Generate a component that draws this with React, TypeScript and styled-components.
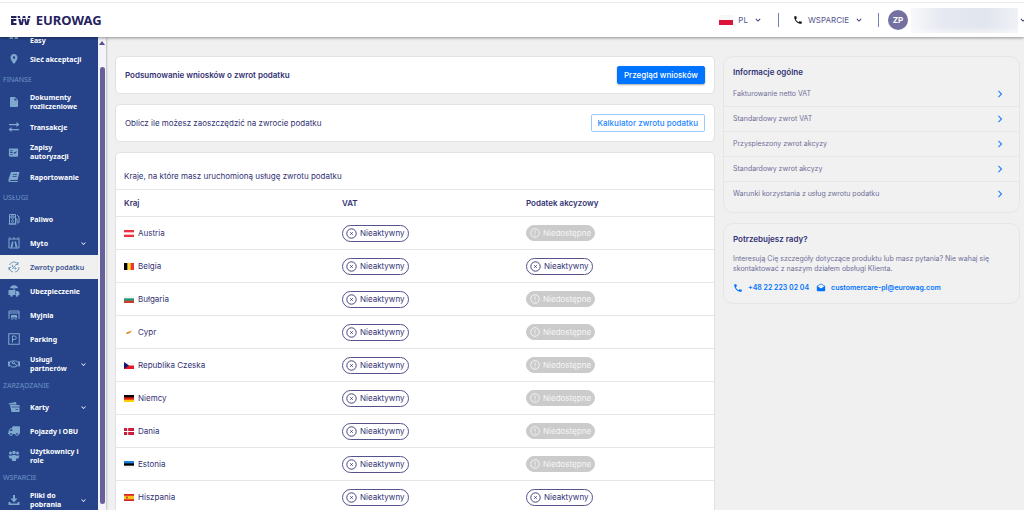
import React from 'react';
import styled, { createGlobalStyle, css } from 'styled-components';
import {
  MdLocationOn, MdInsertDriveFile, MdPhone, MdDrafts, MdKeyboardArrowDown, MdChevronRight, MdFactCheck,
} from 'react-icons/md';
import { FaRegHandshake, FaTruck } from 'react-icons/fa';

const navy = '#323174';
const blue = '#0073ff';
const line = '#e6e6ea';

const GlobalStyle = createGlobalStyle`
  * { box-sizing: border-box; }
  body { margin: 0; background: #f0f0f0; color: ${navy}; font-family: Inter, "Liberation Sans", sans-serif; font-size: 8px; line-height: 10px; }
  button { font-family: inherit; cursor: pointer; }
  a { color: inherit; text-decoration: none; }
  svg { display: block; flex: none; }
  h2, p, ul { margin: 0; padding: 0; }
  ul { list-style: none; }
`;

const Page = styled.div`
  height: 100vh;
  display: flex;
  flex-direction: column;
  overflow: hidden;
`;

const Header = styled.header`
  flex: none;
  height: 37px;
  padding: 3px 0 0 10px;
  display: flex;
  align-items: center;
  background: #fff;
  background-image: linear-gradient(#e9e9e9, #e9e9e9);
  background-size: 100% 1px;
  background-position: 0 2px;
  background-repeat: no-repeat;
  box-shadow: 0 1px 3px rgba(0, 0, 0, 0.4);
  position: relative;
  z-index: 2;
`;

const Brand = styled.a`
  display: flex;
  align-items: center;
  gap: 5px;
  margin-right: auto;
  font: 700 13px/16px "Noto Sans", sans-serif;
  color: #25235f;
`;

const BrandMark = styled.span`
  font: 800 13px/16px "Open Sans", sans-serif;
  background: linear-gradient(#fff, #fff) 0 6px / 100% 1px no-repeat, #25235f;
  background-clip: text;
  color: transparent;
`;

const HeaderButton = styled.button<{ $wide?: boolean }>`
  border: 0;
  background: none;
  padding: 0 ${p => (p.$wide ? 14 : 15)}px;
  height: 14px;
  display: flex;
  align-items: center;
  gap: 5px;
  font-size: 8px;
  line-height: 10px;
  color: #55548c;
  border-right: 1px solid #6f83b8;
`;

const Account = styled.button`
  border: 0;
  background: none;
  margin-right: -4px;
  padding: 0 0 0 9px;
  display: flex;
  align-items: center;
  gap: 3px;
  color: ${navy};
  > svg { margin-left: -3px; }
`;

const Avatar = styled.span`
  width: 20px;
  height: 20px;
  border-radius: 50%;
  background: #7470a0;
  color: #fff;
  font-weight: 700;
  font-size: 8px;
  line-height: 20px;
  text-align: center;
`;

const HiddenName = styled.span`
  width: 107px;
  height: 25px;
  background: linear-gradient(90deg, #f8f9fb, #e6e9f1 28%, #e1e5ee 70%, #eff1f6);
  box-shadow: inset 0 -5px 5px -2px rgba(250, 250, 252, 0.7);
`;

const Body = styled.div`
  flex: 1;
  min-height: 0;
  display: flex;
`;

const Sidebar = styled.nav`
  flex: none;
  width: 98px;
  background: #26438a;
  overflow: hidden;
  font-family: "Noto Sans", sans-serif;
`;

const NavList = styled.ul`
  margin-top: -14px;
`;

const NavSection = styled.li`
  height: 18px;
  padding-left: 3px;
  font-size: 7px;
  line-height: 18px;
  color: #6e93c4;
`;

const NavLink = styled.a<{ $tall?: boolean; $active?: boolean; $low?: boolean }>`
  height: ${p => (p.$tall ? 26 : 24)}px;
  padding: 0 10px 0 8px;
  display: grid;
  grid-template-columns: 12px 1fr auto;
  column-gap: 10px;
  align-items: center;
  font-size: 7px;
  line-height: 9px;
  font-weight: 700;
  white-space: nowrap;
  color: #fff;
  > svg:first-child { color: #7fa8cf; }
  > span { padding-top: ${p => (p.$low ? 10 : 0)}px; }
  ${p => p.$active && css`
    background: #f0f0f0;
    color: #35508f;
    font-weight: 600;
    > svg:first-child { color: #5b8fb9; }
  `}
`;

const ScrollTrack = styled.div`
  flex: none;
  width: 8px;
  padding: 4px 1px 6px;
  display: flex;
  flex-direction: column;
  align-items: center;
  gap: 22px;
  background: #f3f3f9;
  box-shadow: 1px 0 2px rgba(0, 0, 0, 0.2);
`;

const ScrollThumb = styled.div`
  flex: 1;
  width: 5px;
  border-radius: 3px;
  background: #65619a;
`;

const Main = styled.main`
  flex: 1;
  min-width: 0;
  padding: 19px 4px 0 9px;
  display: grid;
  grid-template-columns: minmax(0, 1fr) 297px;
  align-items: start;
  gap: 8px;
`;

const Column = styled.div`
  display: flex;
  flex-direction: column;
  gap: 10px;
`;

const Card = styled.section`
  background: #fff;
  border: 1px solid #e2e2e4;
  border-radius: 5px;
`;

const ActionCard = styled(Card)`
  height: 38px;
  padding: 0 9px;
  display: flex;
  align-items: center;
  justify-content: space-between;
`;

const CardTitle = styled.h2`
  font-size: 8px;
  line-height: 10px;
  font-weight: 600;
`;

const ActionButton = styled.button<{ $primary?: boolean }>`
  height: 18px;
  padding: 0 6px;
  border-radius: 2px;
  font-size: 8px;
  line-height: 10px;
  font-weight: 500;
  border: 1px solid ${p => (p.$primary ? blue : '#9ccaff')};
  background: ${p => (p.$primary ? blue : '#fff')};
  color: ${p => (p.$primary ? '#fff' : '#2585ff')};
  box-shadow: ${p => (p.$primary ? '0 1px 2px rgba(0, 0, 0, 0.35)' : 'none')};
`;

const TableIntro = styled.p`
  height: 37px;
  padding: 18px 8px 0;
  border-bottom: 1px solid ${line};
`;

const Table = styled.table`
  width: 100%;
  table-layout: fixed;
  border-collapse: separate;
  border-spacing: 0;
  th, td { padding: 0 8px; text-align: left; border-bottom: 1px solid ${line}; }
  th { height: 27px; font-weight: 600; }
  td { height: 33px; }
`;

const WideCol = styled.col`width: 218px;`;
const MidCol = styled.col`width: 184px;`;

const Country = styled.span`
  display: flex;
  align-items: center;
  gap: 4px;
`;

const Pill = styled.span<{ $off?: boolean }>`
  display: inline-flex;
  align-items: center;
  vertical-align: middle;
  gap: 3px;
  height: ${p => (p.$off ? 16 : 17)}px;
  padding: 0 3px;
  border-radius: 9px;
  border: 1px solid ${p => (p.$off ? '#cbcbcb' : '#55528c')};
  background: ${p => (p.$off ? '#cbcbcb' : '#fff')};
  color: ${p => (p.$off ? '#f6f6f6' : navy)};
`;

const InfoCard = styled(Card)`
  background: #f1f1f1;
  border-color: #e6e6e6;
  border-radius: 10px;
  padding: 10px 0 6px;
  > h2 { padding: 0 9px; }
`;

const InfoList = styled.ul`
  padding-top: 4px;
`;

const InfoLink = styled.a`
  height: 25px;
  padding: 0 12px 0 9px;
  display: flex;
  align-items: center;
  justify-content: space-between;
  font-size: 7px;
  color: #706f99;
  svg { color: #2585ff; }
  li + li & { border-top: 1px solid #e6e6e6; }
`;

const HelpText = styled.p`
  padding: 10px 9px 0;
  font-size: 7px;
  line-height: 10px;
  color: #706f99;
`;

const Contacts = styled.div`
  padding: 9px 9px 4px;
  display: flex;
  gap: 7px;
`;

const ContactLink = styled.a`
  display: flex;
  align-items: center;
  gap: 5px;
  font-size: 7px;
  line-height: 10px;
  font-weight: 600;
  color: ${blue};
`;

const Glyph = ({ children }: { children: React.ReactNode }) => (
  <svg width="12" height="12" viewBox="0 0 24 24" fill="none" stroke="currentColor" strokeWidth="2" aria-hidden="true">{children}</svg>
);

const solid = { fill: 'currentColor', stroke: 'none' };

const icons = {
  easy: <Glyph><path {...solid} d="M3 6h7v14H3zM13 6h7v14h-7z" /></Glyph>,
  pin: <MdLocationOn size={12} />,
  file: <MdInsertDriveFile size={12} />,
  swap: <Glyph><path d="M2 7h18M4 17h18" strokeWidth="2.5" /><path {...solid} d="M17 2l6 5-6 5zM7 12l-6 5 6 5z" /></Glyph>,
  check: <MdFactCheck size={11} />,
  book: <Glyph><path {...solid} d="M8 2h15l-4 16H5c-2 0-2 2 0 2h15l-1 2H4c-3 0-4-2-3-5L5 5c0-2 1-3 3-3z" /><path d="M10 7h8M9 11h8" stroke="#26438a" strokeWidth="1.5" /></Glyph>,
  fuel: <Glyph><path d="M3 22V3h12v19zM1 22h16M6 6h6v4H6zM15 12h3v6c0 3 4 3 4 0V8l-4-4" /><path d="M9 13c-3 4-2 6 0 6s3-2 0-6z" /></Glyph>,
  toll: <Glyph><path d="M2 22V4h20v18zM1 2h4M10 2h4M19 2h4" /><path {...solid} d="M8 9h3l-2 12H5zM13 9h3l3 12h-4z" /></Glyph>,
  refund: <Glyph><path d="M20 6A10 10 0 0 0 3 8M2 13a10 10 0 0 0 8 9M14 22a10 10 0 0 0 8-10" strokeWidth="1.8" /><path d="M20 2v5h-5M2 18v-5h4" strokeWidth="1.8" /><path d="M9 16l6-7" /><circle cx="9" cy="10" r="1.2" /><circle cx="15" cy="15" r="1.2" /></Glyph>,
  insure: <Glyph><path {...solid} d="M4 7c0-9 16-9 16 0l-3-1-2 1-3-1-3 1-2-1zM1 10h14v10H1zM16 12h4l3 4v4h-7z" /><path d="M12 5v5" /><circle {...solid} cx="7" cy="21" r="2.5" /><circle {...solid} cx="18" cy="21" r="2.5" /></Glyph>,
  wash: <Glyph><path d="M2 20V4h20v16M2 8h20" /><path d="M7 18v-5h10v5zM8 20v2M16 20v2M7 15h10" /></Glyph>,
  parking: <Glyph><rect x="1.5" y="1.5" width="21" height="21" /><path d="M9 19V6h4a3.500 3.500 0 0 1 0 7H9" /></Glyph>,
  partner: <FaRegHandshake size={12} />,
  cards: <Glyph><path {...solid} d="M1 5l15-3 1 5H2zM4 8h19v14H7z" /><path d="M7 12h16M15 17h5" stroke="#26438a" strokeWidth="1.5" /></Glyph>,
  truck: <FaTruck size={12} transform="scale(-1 1)" />,
  users: <Glyph><g {...solid}><circle cx="5" cy="6" r="3" /><circle cx="12" cy="5" r="3.500" /><circle cx="19" cy="6" r="3" /><path d="M1 11h6l1 6H3zM17 11h6l-2 6h-5zM7 12c0-3 10-3 10 0l-1 10H8z" /></g></Glyph>,
  download: <Glyph><path {...solid} d="M10 2h4v7h5l-7 8-7-8h5zM1 16h4v3h14v-3h4v6H1z" /></Glyph>,
};

type NavItem = { icon: keyof typeof icons; lines: string[]; menu?: boolean; active?: boolean; low?: boolean };
type NavEntry = { section: string } | NavItem;

const nav: NavEntry[] = [
  { icon: 'easy', lines: ['Easy'], low: true },
  { icon: 'pin', lines: ['Sieć akceptacji'] },
  { section: 'FINANSE' },
  { icon: 'file', lines: ['Dokumenty', 'rozliczeniowe'] },
  { icon: 'swap', lines: ['Transakcje'] },
  { icon: 'check', lines: ['Zapisy', 'autoryzacji'] },
  { icon: 'book', lines: ['Raportowanie'] },
  { section: 'USŁUGI' },
  { icon: 'fuel', lines: ['Paliwo'] },
  { icon: 'toll', lines: ['Myto'], menu: true },
  { icon: 'refund', lines: ['Zwroty podatku'], active: true },
  { icon: 'insure', lines: ['Ubezpieczenie'] },
  { icon: 'wash', lines: ['Myjnia'] },
  { icon: 'parking', lines: ['Parking'] },
  { icon: 'partner', lines: ['Usługi', 'partnerów'], menu: true },
  { section: 'ZARZĄDZANIE' },
  { icon: 'cards', lines: ['Karty'], menu: true },
  { icon: 'truck', lines: ['Pojazdy i OBU'] },
  { icon: 'users', lines: ['Użytkownicy i', 'role'] },
  { section: 'WSPARCIE' },
  { icon: 'download', lines: ['Pliki do', 'pobrania'], menu: true },
];

const stripes = (a: string, b: string, c: string) => (
  <><rect width="10" height="7" fill={b} /><rect width="10" height="2.33" fill={a} /><rect y="4.67" width="10" height="2.33" fill={c} /></>
);

const flags: Record<string, React.ReactNode> = {
  at: stripes('#ed3340', '#fff', '#ed3340'),
  be: <><rect width="10" height="7" fill="#fdda24" /><rect width="3.33" height="7" /><rect x="6.67" width="3.33" height="7" fill="#ef3340" /></>,
  bg: stripes('#f4f4f4', '#219a78', '#d13b2c'),
  cy: <path d="M2 4C3 2.500 5 3 8 1.500 7 3 6.500 4.500 4 4.800L2.500 5z" fill="#e08a2c" />,
  cz: <><rect width="10" height="7" fill="#f6f6f6" /><rect y="3.500" width="10" height="3.500" fill="#e81b22" /><path d="M0 0l5 3.500L0 7z" fill="#15156b" /></>,
  de: stripes('#000', '#dd1c1c', '#ffce00'),
  dk: <><rect width="10" height="7" fill="#c8203c" /><path d="M3.700 0v7M0 3.500h10" stroke="#fff" /></>,
  ee: stripes('#1f83dc', '#000', '#f4f4f4'),
  es: <><rect width="10" height="7" fill="#d8222a" /><rect y="1.750" width="10" height="3.500" fill="#fbc51c" /><rect x="2" y="2.500" width="2" height="2" fill="#b8602a" /></>,
};

const countries = [
  { flag: 'at', name: 'Austria', excise: false },
  { flag: 'be', name: 'Belgia', excise: true },
  { flag: 'bg', name: 'Bułgaria', excise: false },
  { flag: 'cy', name: 'Cypr', excise: false },
  { flag: 'cz', name: 'Republika Czeska', excise: false },
  { flag: 'de', name: 'Niemcy', excise: false },
  { flag: 'dk', name: 'Dania', excise: false },
  { flag: 'ee', name: 'Estonia', excise: false },
  { flag: 'es', name: 'Hiszpania', excise: true },
];

const infoLinks = [
  'Fakturowanie netto VAT',
  'Standardowy zwrot VAT',
  'Przyspieszony zwrot akcyzy',
  'Standardowy zwrot akcyzy',
  'Warunki korzystania z usług zwrotu podatku',
];

const Inactive = () => (
  <Pill>
    <svg width="11" height="11" viewBox="0 0 11 11" fill="none" stroke="currentColor">
      <circle cx="5.500" cy="5.500" r="4.700" strokeWidth="0.900" /><path d="M4.300 4.300l2.400 2.400M6.700 4.300L4.300 6.700" strokeWidth="0.900" />
    </svg>
    Nieaktywny
  </Pill>
);

const Unavailable = () => (
  <Pill $off>
    <svg width="10" height="10" viewBox="0 0 10 10" fill="none" stroke="currentColor" strokeWidth="0.900">
      <circle cx="5" cy="5" r="4.300" /><path d="M5 2.500v3M5 6.500v1" />
    </svg>
    Niedostępne
  </Pill>
);

export default function App() {
  return (
    <Page>
      <GlobalStyle />
      <Header>
        <Brand href="#">
          <BrandMark>EW</BrandMark>
          EUROWAG
        </Brand>
        <HeaderButton>
          <svg width="14" height="10" viewBox="0 0 14 10"><rect width="14" height="5" fill="#f7f7f7" /><rect y="5" width="14" height="5" fill="#dc143c" /></svg>
          PL
          <MdKeyboardArrowDown size={10} color={navy} />
        </HeaderButton>
        <HeaderButton $wide>
          <MdPhone size={10} color="#111" />
          WSPARCIE
          <MdKeyboardArrowDown size={10} color={navy} />
        </HeaderButton>
        <Account aria-label="Konto">
          <Avatar>ZP</Avatar>
          <HiddenName />
          <MdKeyboardArrowDown size={10} />
        </Account>
      </Header>
      <Body>
        <Sidebar>
          <NavList>
            {nav.map((n, i) =>
              'section' in n ? (
                <NavSection key={i}>{n.section}</NavSection>
              ) : (
                <li key={i}>
                  <NavLink href="#" $tall={n.lines.length > 1} $active={n.active} $low={n.low}>
                    {icons[n.icon]}
                    <span>{n.lines.map((l, k) => <React.Fragment key={k}>{k > 0 && <br />}{l}</React.Fragment>)}</span>
                    {n.menu && <MdKeyboardArrowDown size={9} />}
                  </NavLink>
                </li>
              )
            )}
          </NavList>
        </Sidebar>
        <ScrollTrack>
          <svg width="6" height="4" viewBox="0 0 6 4"><path d="M0 4l3-4 3 4z" fill="#55518c" /></svg>
          <ScrollThumb />
        </ScrollTrack>
        <Main>
          <Column>
            <ActionCard>
              <CardTitle>Podsumowanie wniosków o zwrot podatku</CardTitle>
              <ActionButton $primary>Przegląd wniosków</ActionButton>
            </ActionCard>
            <ActionCard>
              <p>Oblicz ile możesz zaoszczędzić na zwrocie podatku</p>
              <ActionButton>Kalkulator zwrotu podatku</ActionButton>
            </ActionCard>
            <Card>
              <TableIntro>Kraje, na które masz uruchomioną usługę zwrotu podatku</TableIntro>
              <Table>
                <colgroup><WideCol /><MidCol /><col /></colgroup>
                <thead><tr><th>Kraj</th><th>VAT</th><th>Podatek akcyzowy</th></tr></thead>
                <tbody>
                  {countries.map(c => (
                    <tr key={c.flag}>
                      <td><Country><svg width="10" height="7" viewBox="0 0 10 7">{flags[c.flag]}</svg>{c.name}</Country></td>
                      <td><Inactive /></td>
                      <td>{c.excise ? <Inactive /> : <Unavailable />}</td>
                    </tr>
                  ))}
                </tbody>
              </Table>
            </Card>
          </Column>
          <Column>
            <InfoCard>
              <CardTitle>Informacje ogólne</CardTitle>
              <InfoList>
                {infoLinks.map(t => <li key={t}><InfoLink href="#">{t}<MdChevronRight size={14} /></InfoLink></li>)}
              </InfoList>
            </InfoCard>
            <InfoCard>
              <CardTitle>Potrzebujesz rady?</CardTitle>
              <HelpText>
                Interesują Cię szczegóły dotyczące produktu lub masz pytania? Nie wahaj się skontaktować z naszym działem obsługi Klienta.
              </HelpText>
              <Contacts>
                <ContactLink href="tel:+48222230204"><MdPhone size={10} />+48 22 223 02 04</ContactLink>
                <ContactLink href="mailto:customercare-pl@eurowag.com"><MdDrafts size={10} />customercare-pl@eurowag.com</ContactLink>
              </Contacts>
            </InfoCard>
          </Column>
        </Main>
      </Body>
    </Page>
  );
}
